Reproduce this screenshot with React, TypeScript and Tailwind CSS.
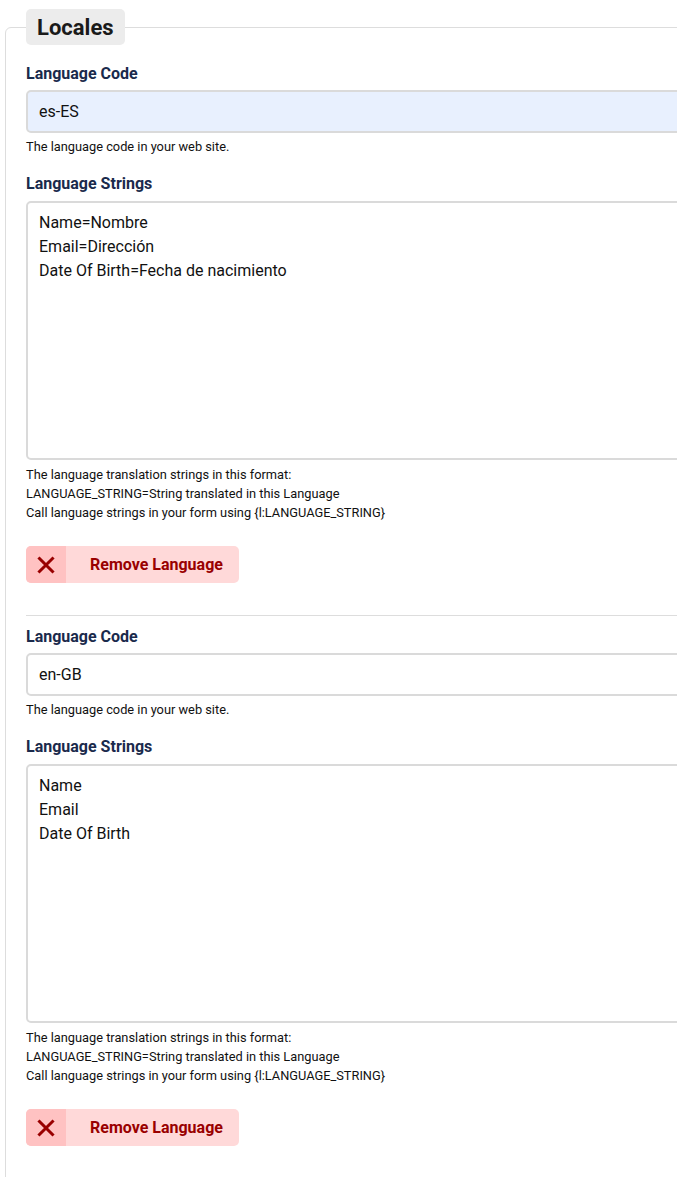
import React from 'react'

const locales = [
  { code: 'es-ES', strings: 'Name=Nombre\nEmail=Dirección\nDate Of Birth=Fecha de nacimiento', filled: true },
  { code: 'en-GB', strings: 'Name\nEmail\nDate Of Birth', filled: false },
]

function XIcon() {
  return (
    <svg width="18" height="18" viewBox="0 0 18 18" fill="none">
      <path d="M2.5 2.5L15.5 15.5M15.5 2.5L2.5 15.5" stroke="#990000" strokeWidth="3" strokeLinecap="square" />
    </svg>
  )
}

function LocaleBlock({ code, strings, filled, last }: { code: string; strings: string; filled: boolean; last: boolean }) {
  return (
    <div className={last ? '' : 'border-b border-[#dddddd] pb-[32px] mb-[8px]'}>
      <label className="block pt-[1px] text-[16px] leading-[24px] font-bold text-[#1a2a4c]">Language Code</label>
      <div
        className={`mt-[4px] h-[43px] flex items-center px-[11px] border-2 border-[#dadada] rounded-[5px] text-[16px] text-[#111] ${
          filled ? 'bg-[#e8f0fe]' : 'bg-white'
        }`}
      >
        {code}
      </div>
      <p className="mt-[5px] text-[12.8px] leading-[18px] text-[#111]">The language code in your web site.</p>

      <label className="block mt-[16px] text-[16px] leading-[24px] font-bold text-[#1a2a4c]">Language Strings</label>
      <div className="mt-[5px] h-[259px] border-2 border-[#dadada] rounded-[5px] px-[11px] pt-[8px] text-[16px] leading-[24px] text-[#111] whitespace-pre-line">
        {strings}
      </div>
      <div className="mt-[5px] text-[12.8px] leading-[19px] text-[#111]">
        <p>The language translation strings in this format:</p>
        <p>LANGUAGE_STRING=String translated in this Language</p>
        <p>Call language strings in your form using {'{l:LANGUAGE_STRING}'}</p>
      </div>

      <button className="mt-[24px] flex h-[37px] w-[213px] rounded-[5px] overflow-hidden bg-[#ffd9d9]">
        <span className="w-[40px] h-full flex items-center justify-center bg-[#ffc2c2]">
          <XIcon />
        </span>
        <span className="flex-1 flex items-center pl-[24px] text-[16px] font-bold text-[#990000]">Remove Language</span>
      </button>
    </div>
  )
}

export default function App() {
  return (
    <div className="w-full h-[1177px] overflow-hidden bg-white font-['Roboto',sans-serif]">
      <div className="w-[760px] pt-[9px]">
        <div className="ml-[5px] mt-[18px] border border-[#dddddd] rounded-tl-[6px] pl-[20px] pr-[20px] pb-[40px]">
          <div className="-mt-[19px] mb-[16px] w-fit flex h-[36px] items-center px-[11px] bg-[#ececec] rounded-[5px]">
            <span className="text-[22px] font-bold text-[#1a1a1a]">Locales</span>
          </div>
          {locales.map((l, i) => (
            <LocaleBlock key={l.code} {...l} last={i === locales.length - 1} />
          ))}
        </div>
      </div>
    </div>
  )
}
